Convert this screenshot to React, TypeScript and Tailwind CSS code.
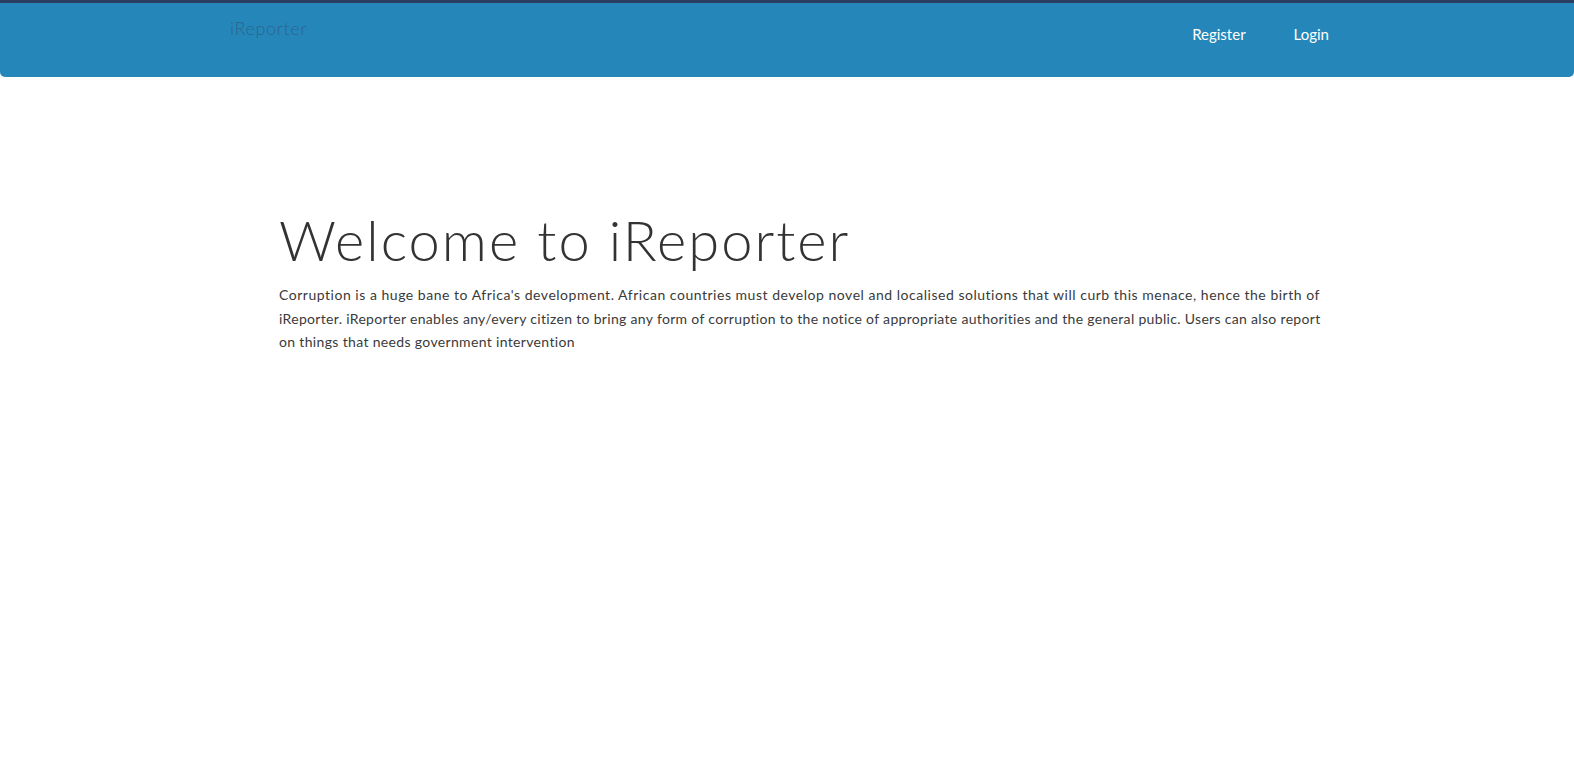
export default function App() {
  return (
    <div className="min-h-screen bg-white" style={{ fontFamily: "Lato, 'Open Sans', sans-serif" }}>
      <nav className="h-[77px] bg-[#2587b9] border-t-[3px] border-[#2a3f63] rounded-[5px] rounded-t-none">
        <div className="flex items-start">
          <div className="ml-[230px] pt-[12px] text-[18px] font-light text-[#2c6490] tracking-[0.6px]">iReporter</div>
          <div className="ml-auto mr-[245px] flex gap-[48px] pt-[20px] text-[15px] text-white">
            <a className="cursor-pointer">Register</a>
            <a className="cursor-pointer">Login</a>
          </div>
        </div>
      </nav>
      <main className="mx-auto w-[1016px] pt-[129px]">
        <h1 className="text-[56px] font-light leading-[1.2] text-[#333333] tracking-[2px]">Welcome to iReporter</h1>
        <p className="mt-[10px] text-[14px] leading-[23.5px] text-[#3a3a3a] whitespace-nowrap">
          <span className="block tracking-[0.52px]">
            Corruption is a huge bane to Africa's development. African countries must develop novel and localised solutions that will curb this menace, hence the birth of
          </span>
          <span className="block tracking-[0.32px]">
            iReporter. iReporter enables any/every citizen to bring any form of corruption to the notice of appropriate authorities and the general public. Users can also report
          </span>
          <span className="block tracking-[0.34px]">on things that needs government intervention</span>
        </p>
      </main>
    </div>
  );
}
